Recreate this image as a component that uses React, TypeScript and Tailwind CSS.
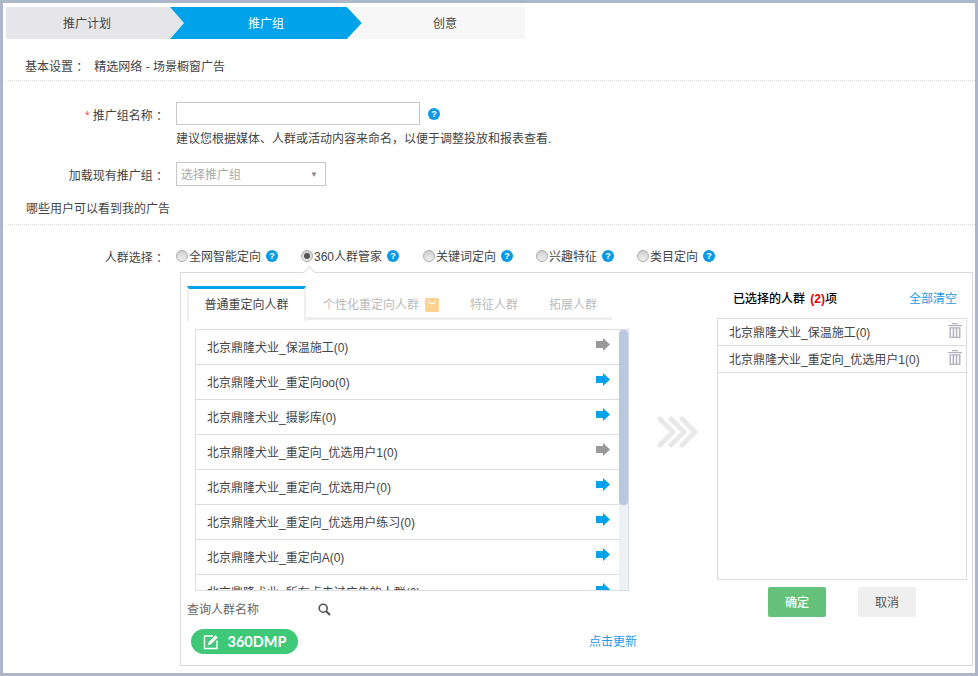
import React from 'react';

const leftRows = [
  { name: '北京鼎隆犬业_保温施工(0)', picked: true },
  { name: '北京鼎隆犬业_重定向oo(0)', picked: false },
  { name: '北京鼎隆犬业_摄影库(0)', picked: false },
  { name: '北京鼎隆犬业_重定向_优选用户1(0)', picked: true },
  { name: '北京鼎隆犬业_重定向_优选用户(0)', picked: false },
  { name: '北京鼎隆犬业_重定向_优选用户练习(0)', picked: false },
  { name: '北京鼎隆犬业_重定向A(0)', picked: false },
  { name: '北京鼎隆犬业_所有点击过广告的人群(0)', picked: false },
];

const rightRows = ['北京鼎隆犬业_保温施工(0)', '北京鼎隆犬业_重定向_优选用户1(0)'];

const targets = [
  { label: '全网智能定向', on: false, w: 'w-[125px]' },
  { label: '360人群管家', on: true, w: 'w-[122px]' },
  { label: '关键词定向', on: false, w: 'w-[113px]' },
  { label: '兴趣特征', on: false, w: 'w-[101px]' },
  { label: '类目定向', on: false, w: 'w-[90px]' },
];

const Help = () => (
  <span className="flex h-[12px] w-[12px] items-center justify-center rounded-full bg-[#0a9be8] text-[9px] font-bold leading-none text-white">
    ?
  </span>
);

const Arrow = ({ color }: { color: string }) => (
  <svg width="14" height="13" viewBox="0 0 14 13">
    <path d="M0 3h7V0l7 6.5L7 13v-3H0z" fill={color} />
  </svg>
);

const Trash = () => (
  <svg width="14" height="15" viewBox="0 0 14 15" fill="#b4b4c0">
    <path d="M0 2h14v1.2H0zM4 0h6v1.2H4zM1.5 4.2h11V15h-11zM3 5.4v8.4h1.6V5.4zm3.2 0v8.4h1.6V5.4zm3.2 0v8.4H11V5.4z" fillRule="evenodd" />
  </svg>
);

export default function App() {
  return (
    <div className="h-[676px] w-[978px] overflow-hidden border-[3px] border-[#adb7c9] bg-white pt-[4px] font-['Liberation_Sans','Noto_Sans_CJK_SC',sans-serif] text-[12px] text-[#444]">
      {/* Steps */}
      <div className="ml-[3px] flex h-[32px] w-[519px]">
        <div className="flex w-[178px] shrink-0 items-center bg-[#e5e5ea] pl-[57px] pt-[1px] [clip-path:polygon(0_0,164px_0,178px_50%,163px_100%,0_100%)]">
          推广计划
        </div>
        <div className="-ml-[14px] flex w-[192px] shrink-0 items-center bg-[#00a2e9] pl-[78px] pt-[1px] text-white [clip-path:polygon(0_100%,14px_50%,0_0,177px_0,192px_50%,177px_100%)]">
          推广组
        </div>
        <div className="-ml-[15px] flex flex-1 items-center bg-[#f7f7f7] pl-[86px] pt-[1px] [clip-path:polygon(0_0,100%_0,100%_100%,0_100%,15px_50%)]">
          创意
        </div>
      </div>

      <div className="ml-[3px] flex h-[42px] items-center gap-[6px] border-b border-dotted border-[#ddd] pl-[19px] pt-[14px]">
        <span>基本设置 ：</span>
        <span>精选网络 - 场景橱窗广告</span>
      </div>

      {/* Name */}
      <div className="mt-[21px] flex items-start">
        <label className="flex h-[24px] w-[173px] shrink-0 items-center justify-end pr-[8px] pt-[3px]">
          <span className="mr-[3px] text-[#f25555]">*</span>推广组名称 ：
        </label>
        <div>
          <div className="flex items-center">
            <input className="h-[23px] w-[244px] border border-[#c8c8c8] bg-white" />
            <span className="ml-[8px] mt-[1px]"><Help /></span>
          </div>
          <p className="mt-[5px] leading-[18px]">建议您根据媒体、人群或活动内容来命名，以便于调整投放和报表查看.</p>
        </div>
      </div>

      <div className="mt-[14px] flex items-center">
        <label className="w-[173px] shrink-0 pr-[8px] pt-[3px] text-right">加载现有推广组 ：</label>
        <div className="flex h-[24px] w-[150px] items-center justify-between border border-[#c8c8c8] pl-[4px] pr-[7px] pt-[2px] text-[#aaa]">
          选择推广组
          <span className="text-[8px] text-[#888]">▼</span>
        </div>
      </div>

      <div className="ml-[3px] mt-[11px] flex h-[28px] items-start border-b border-dotted border-[#ddd] pl-[20px] pt-[3px]">
        哪些用户可以看到我的广告
      </div>

      {/* Target radios */}
      <div className="mt-[22px] flex h-[18px] items-center">
        <label className="w-[173px] shrink-0 pr-[8px] pt-[3px] text-right">人群选择 ：</label>
        {targets.map((t) => (
          <div key={t.label} className={`flex items-center ${t.w}`}>
            <span className="flex h-[12px] w-[12px] items-center justify-center rounded-full border border-[#aaa] bg-gradient-to-b from-[#d0d0d0] to-[#efefef]">
              {t.on && <span className="h-[6px] w-[6px] rounded-full bg-[#555]" />}
            </span>
            <span className="ml-px mr-[5px] pt-[2px]">{t.label}</span>
            <Help />
          </div>
        ))}
      </div>

      {/* Panel */}
      <div className="relative ml-[177px] mt-[7px] flex h-[394px] w-[793px] border border-[#d9d9de]">
        <span className="absolute -top-[5px] left-[124px] h-[9px] w-[9px] rotate-45 border-l border-t border-[#d9d9de] bg-white" />
        <div className="ml-[6px] w-[442px] pt-[13px]">
          <div className="flex h-[34px] w-[425px] border-b-[3px] border-[#eee]">
            <div className="h-[35px] w-[119px] border-x-2 border-t-[3px] border-x-[#eee] border-t-[#00a2e9] bg-white pt-[7px] text-center">
              普通重定向人群
            </div>
            <div className="flex items-center pl-[17px] pt-[6px] text-[#bbb]">
              个性化重定向人群
              <span className="ml-[6px] flex h-[14px] w-[14px] items-start justify-center rounded-[2px] bg-[#fdd28e]">
                <span className="mt-[2px] h-[4px] w-[8px] rounded-b-full border-x border-b border-white" />
              </span>
              <span className="ml-[31px]">特征人群</span>
              <span className="ml-[31px]">拓展人群</span>
            </div>
          </div>
          <div className="ml-[8px] mt-[9px] flex h-[262px] w-[434px] overflow-hidden border border-[#dcdde2]">
            <div className="min-w-0 flex-1">
              {leftRows.map((r) => (
                <div key={r.name} className="flex h-[35px] items-center justify-between border-b border-[#dcdde2] pl-[11px] pr-[9px]">
                  <span className="pt-[2px]">{r.name}</span>
                  <span className="-mt-[5px]"><Arrow color={r.picked ? '#999999' : '#00a2e9'} /></span>
                </div>
              ))}
            </div>
            <div className="w-[9px] shrink-0 bg-[#edf0f5]">
              <div className="h-[175px] rounded-[4px] bg-[#b8c8e0]" />
            </div>
          </div>
          <div className="mt-[9px] flex h-[18px] items-center text-[#666]">
            <span className="w-[131px] pt-[2px]">查询人群名称</span>
            <svg width="13" height="13" viewBox="0 0 13 13" fill="none" stroke="#555" strokeWidth="1.6">
              <circle cx="5.2" cy="5.2" r="4" />
              <path d="M8.2 8.2L12 12" strokeWidth="2.2" />
            </svg>
          </div>
          <div className="mt-[11px] flex items-center justify-between pl-[4px]">
            <div className="flex h-[25px] w-[107px] items-center justify-center gap-[9px] rounded-full bg-[#3ec878] text-[14.5px] font-bold text-white">
              <svg width="16" height="16" viewBox="0 0 16 16" fill="none" stroke="#fff">
                <path d="M10 2H1.5v12.5H14V6.5" strokeWidth="1.4" />
                <path d="M5 11l1-3 6.5-6.5 2 2L8 10z" fill="#fff" strokeWidth="0.5" />
              </svg>
              <span className="font-['Lato','Liberation_Sans',sans-serif]">360DMP</span>
            </div>
            <span className="-mr-[8px] text-[#1e9be8]">点击更新</span>
          </div>
        </div>

        {/* Chevrons */}
        <div className="flex w-[88px] shrink-0 items-start pl-[28px] pt-[143px]">
          <svg width="41" height="32" viewBox="0 0 41 32" fill="none" stroke="#e8e8e8" strokeWidth="5" strokeLinecap="round" strokeLinejoin="round">
            <path d="M3 3l13 13L3 29M14 3l13 13-13 13M25 3l13 13-13 13" />
          </svg>
        </div>

        {/* Selected */}
        <div className="w-[250px] pt-[16px]">
          <div className="flex h-[20px] items-center justify-between">
            <span className="ml-[16px] font-medium text-black">
              已选择的人群 <span className="ml-[2px] font-bold text-[#e60000]">(2)</span>项
            </span>
            <span className="mr-[10px] text-[#1e9be8]">全部清空</span>
          </div>
          <div className="mt-[9px] h-[262px] border border-[#dcdde2]">
            {rightRows.map((r) => (
              <div key={r} className="flex h-[27px] items-center justify-between border-b border-[#dcdde2] pl-[11px] pr-[4px]">
                <span className="pt-[2px]">{r}</span>
                <span className="-mt-[3px]"><Trash /></span>
              </div>
            ))}
          </div>
          <div className="ml-[51px] mt-[7px] flex gap-[32px]">
            <button className="h-[30px] w-[58px] rounded-[2px] bg-[#66c27a] pt-[2px] font-medium text-white">确定</button>
            <button className="h-[30px] w-[58px] rounded-[2px] bg-[#efefef] pt-[2px] text-[#555]">取消</button>
          </div>
        </div>
      </div>
    </div>
  );
}
